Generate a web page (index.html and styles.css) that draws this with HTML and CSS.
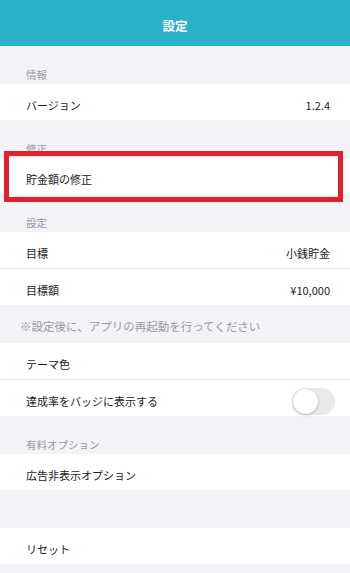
FILE: index.html
```html
<!DOCTYPE html>
<html lang="ja">
<head>
  <meta charset="UTF-8">
  <meta name="viewport" content="width=device-width, initial-scale=1.0">
  <title>設定</title>
  <link rel="stylesheet" href="styles.css">
</head>
<body>
  <div class="nav">設定</div>

  <div class="section-title">情報</div>
  <div class="group">
    <div class="row"><span>バージョン</span><span class="value">1.2.4</span></div>
  </div>

  <div class="section-title">修正</div>
  <div class="group">
    <div class="row marked"><span>貯金額の修正</span></div>
  </div>

  <div class="section-title">設定</div>
  <div class="group">
    <div class="row"><span>目標</span><span class="value">小銭貯金</span></div>
    <div class="row"><span>目標額</span><span class="value">¥10,000</span></div>
  </div>

  <div class="note">※設定後に、アプリの再起動を行ってください</div>
  <div class="group">
    <div class="row"><span>テーマ色</span></div>
    <div class="row">
      <span>達成率をバッジに表示する</span>
      <span class="switch"><span class="knob"></span></span>
    </div>
  </div>

  <div class="section-title">有料オプション</div>
  <div class="group">
    <div class="row"><span>広告非表示オプション</span></div>
  </div>

  <div class="spacer"></div>
  <div class="group">
    <div class="row"><span>リセット</span></div>
  </div>
</body>
</html>
```

FILE: styles.css
```css
body {
  margin: 0;
  background-color: #f2f2f7;
  font-family: "Noto Sans CJK JP", "Noto Sans", sans-serif;
  color: #1c1c1e;
  font-size: 11px;
}
.nav {
  height: 46px;
  background-color: #28b1c7;
  color: #fff;
  font-weight: bold;
  font-size: 12.5px;
  display: flex;
  align-items: center;
  justify-content: center;
  padding-top: 5px;
  box-sizing: border-box;
}
.section-title {
  height: 38px;
  box-sizing: border-box;
  padding: 22px 26px 2px;
  line-height: 14px;
  font-size: 10.5px;
  color: #9a9a9f;
}
.group {
  background-color: #fff;
}
.row {
  height: 36px;
  box-sizing: border-box;
  padding: 5px 20px 0 26px;
  display: flex;
  align-items: center;
  justify-content: space-between;
}
.row + .row {
  height: 37px;
  border-top: 1px solid #ececf0;
}
.value {
  color: #1c1c1e;
}
.marked {
  position: relative;
}
.marked::after {
  content: "";
  position: absolute;
  top: -7px;
  bottom: -8px;
  left: 4px;
  right: 7px;
  border: 5px solid #e41f2b;
}
.note {
  height: 38px;
  box-sizing: border-box;
  padding: 4px 20px 0;
  display: flex;
  align-items: center;
  font-size: 11.5px;
  color: #9a9a9f;
}
.switch {
  width: 43px;
  height: 27px;
  border-radius: 14px;
  background-color: #e9e9eb;
  position: relative;
  margin-top: 1px;
  margin-right: -5px;
}
.knob {
  position: absolute;
  top: 1px;
  left: 1px;
  width: 25px;
  height: 25px;
  border-radius: 50%;
  background-color: #fff;
  box-shadow: 0 1px 3px rgba(0, 0, 0, 0.25);
}
.spacer {
  height: 38px;
}
```
